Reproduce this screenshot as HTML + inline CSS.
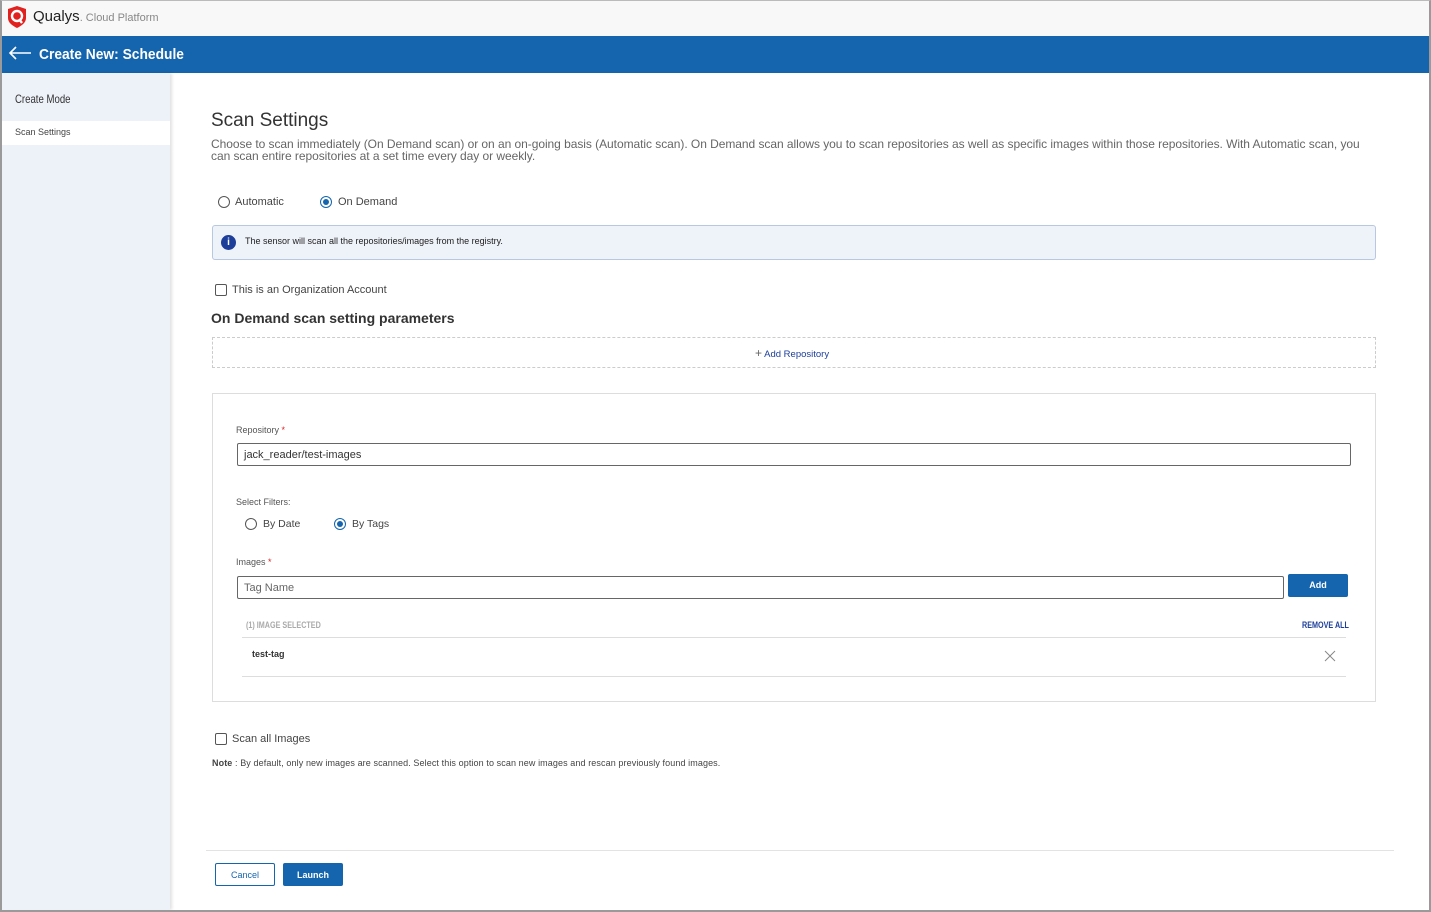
<!DOCTYPE html>
<html><head><meta charset="utf-8"><style>
*{box-sizing:border-box;margin:0;padding:0}
body{width:1431px;height:912px;overflow:hidden;font-family:"Liberation Sans",sans-serif;background:#fff;position:relative;color:#333}
.frame{position:absolute;left:0;top:0;width:1431px;height:912px;border:2px solid #9a9a9a;border-top:1px solid #bbb;pointer-events:none;z-index:10}
.top{position:absolute;left:0;top:0;width:1431px;height:36px;background:#f8f8f8}
.bar{position:absolute;left:0;top:36px;width:1431px;height:37px;background:#1565ae;color:#fff}
.side{position:absolute;left:2px;top:73px;width:168px;height:837px;background:#edf1f8;box-shadow:2px 0 3px rgba(0,0,0,.12)}
.a{position:absolute;white-space:nowrap}
.radio{position:absolute;width:12px;height:12px;border:1px solid #555;border-radius:50%}
.radio.on{border-color:#1565ae}
.radio.on::after{content:"";position:absolute;left:2px;top:2px;width:6px;height:6px;border-radius:50%;background:#1565ae}
.cb{position:absolute;width:12px;height:12px;border:1px solid #555;border-radius:2px}
.input{position:absolute;border:1px solid #666;border-radius:2px;height:23px;font-size:11px;padding:5px 6px;color:#333}
</style></head><body>
<div class="top"></div>
<svg class="a" style="left:6px;top:5px" width="22" height="24" viewBox="0 0 22 24"><path d="M11 1 L20 4 V13 C20 18 15 21 11 23 C7 21 2 18 2 13 V4 Z" fill="#e0211d"/><circle cx="11" cy="11" r="5" fill="none" stroke="#fff" stroke-width="2.4"/><path d="M13 14 L16 18" stroke="#fff" stroke-width="2.4"/></svg>
<div class="a" style="left:33px;top:8px;font-size:15px;color:#222">Qualys<span style="font-size:11px;color:#888">. Cloud Platform</span></div>
<div class="bar">
<svg class="a" style="left:8px;top:10px" width="24" height="14" viewBox="0 0 24 14"><path d="M23 7 H2 M8 1 L2 7 L8 13" stroke="#fff" stroke-width="1.6" fill="none"/></svg>
<div class="a" style="left:39px;top:10px;font-size:15px;font-weight:bold;transform:scaleX(.92);transform-origin:left">Create New: Schedule</div>
</div>
<div class="side">
<div class="a" style="left:13px;top:19px;font-size:12px;color:#333;transform:scaleX(.8);transform-origin:left">Create Mode</div>
<div class="a" style="left:0;top:48px;width:168px;height:24px;background:#fff"></div>
<div class="a" style="left:13px;top:54px;font-size:9px;color:#444">Scan Settings</div>
</div>
<div class="a" style="left:211px;top:110px;font-size:19px;color:#333">Scan Settings</div>
<div class="a" style="left:211px;top:138px;width:1170px;font-size:12px;color:#666;line-height:12px;white-space:normal;letter-spacing:-0.05px">Choose to scan immediately (On Demand scan) or on an on-going basis (Automatic scan). On Demand scan allows you to scan repositories as well as specific images within those repositories. With Automatic scan, you can scan entire repositories at a set time every day or weekly.</div>
<div class="radio" style="left:218px;top:196px"></div><div class="a" style="left:235px;top:196px;font-size:11px;color:#444">Automatic</div>
<div class="radio on" style="left:320px;top:196px"></div><div class="a" style="left:338px;top:196px;font-size:11px;color:#444">On Demand</div>
<div class="a" style="left:212px;top:225px;width:1164px;height:35px;background:#eef2f9;border:1px solid #b8c8e0;border-radius:3px"></div>
<div class="a" style="left:221px;top:235px;width:15px;height:15px;border-radius:50%;background:#1d3f9a;color:#fff;font-size:10px;font-weight:bold;text-align:center;line-height:15px">i</div>
<div class="a" style="left:245px;top:236px;font-size:9px;color:#222">The sensor will scan all the repositories/images from the registry.</div>
<div class="cb" style="left:215px;top:284px"></div><div class="a" style="left:232px;top:284px;font-size:11px;color:#444">This is an Organization Account</div>
<div class="a" style="left:211px;top:310px;font-size:14px;color:#333;font-weight:bold">On Demand scan setting parameters</div>
<div class="a" style="left:212px;top:337px;width:1164px;height:31px;border:1px dashed #ccc"></div>
<div class="a" style="left:755px;top:346px;font-size:9.5px;color:#1d3f9a"><span style="font-size:12px;color:#666">+</span> Add Repository</div>
<div class="a" style="left:212px;top:393px;width:1164px;height:309px;border:1px solid #ddd"></div>
<div class="a" style="left:236px;top:425px;font-size:9px;color:#555">Repository <span style="color:#d22">*</span></div>
<div class="input" style="left:237px;top:443px;width:1114px">jack_reader/test-images</div>
<div class="a" style="left:236px;top:497px;font-size:9px;color:#555">Select Filters:</div>
<div class="radio" style="left:245px;top:518px"></div><div class="a" style="left:263px;top:518px;font-size:10.5px;color:#444">By Date</div>
<div class="radio on" style="left:334px;top:518px"></div><div class="a" style="left:352px;top:518px;font-size:10.5px;color:#444">By Tags</div>
<div class="a" style="left:236px;top:557px;font-size:9px;color:#555">Images <span style="color:#d22">*</span></div>
<div class="input" style="left:237px;top:576px;width:1047px;color:#666">Tag Name</div>
<div class="a" style="left:1288px;top:574px;width:60px;height:23px;background:#1565ae;border-radius:2px;color:#fff;font-size:9px;font-weight:bold;text-align:center;line-height:23px">Add</div>
<div class="a" style="left:246px;top:620px;font-size:9px;color:#aaa;font-weight:bold;transform:scaleX(.8);transform-origin:left">(1) IMAGE SELECTED</div>
<div class="a" style="left:1302px;top:620px;font-size:9px;color:#1d3f9a;font-weight:bold;transform:scaleX(.8);transform-origin:left">REMOVE ALL</div>
<div class="a" style="left:242px;top:637px;width:1104px;height:1px;background:#ddd"></div>
<div class="a" style="left:252px;top:649px;font-size:9px;color:#333;font-weight:bold">test-tag</div>
<svg class="a" style="left:1324px;top:650px" width="12" height="12"><path d="M1 1L11 11M11 1L1 11" stroke="#888" stroke-width="1"/></svg>
<div class="a" style="left:242px;top:676px;width:1104px;height:1px;background:#ddd"></div>
<div class="cb" style="left:215px;top:733px"></div><div class="a" style="left:232px;top:733px;font-size:11px;color:#444">Scan all Images</div>
<div class="a" style="left:212px;top:758px;font-size:9px;color:#444;letter-spacing:.1px"><b>Note</b> : By default, only new images are scanned. Select this option to scan new images and rescan previously found images.</div>
<div class="a" style="left:206px;top:850px;width:1188px;height:1px;background:#e3e3e3"></div>
<div class="a" style="left:215px;top:863px;width:60px;height:23px;border:1px solid #1565ae;border-radius:2px;color:#1565ae;font-size:9px;text-align:center;line-height:23px">Cancel</div>
<div class="a" style="left:283px;top:863px;width:60px;height:23px;background:#1565ae;border-radius:2px;color:#fff;font-size:9px;font-weight:bold;text-align:center;line-height:25px">Launch</div>
<div class="frame"></div>
</body></html>
